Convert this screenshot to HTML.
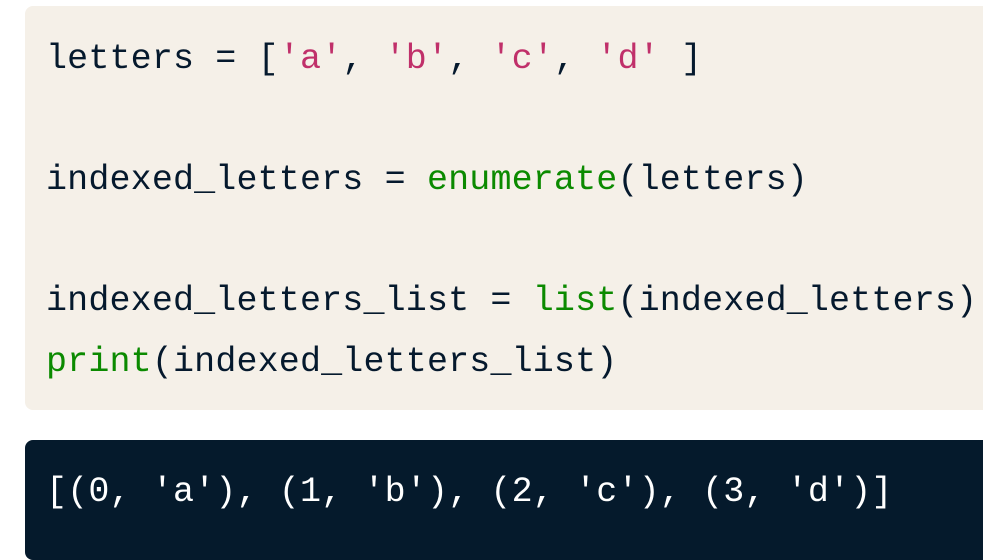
<!DOCTYPE html>
<html><head><meta charset="utf-8"><style>
html,body{margin:0;padding:0;width:983px;height:533px;overflow:hidden;background:#fff;}
.code{position:absolute;left:25px;top:6px;width:980px;height:404px;background:#f5f0e8;border-radius:8px;}
.out{position:absolute;left:25px;top:440px;width:980px;height:120px;background:#051a2c;border-radius:8px;}
pre{margin:0;font-family:"Liberation Mono",monospace;font-size:35px;letter-spacing:0.16px;line-height:60.5px;white-space:pre;position:absolute;}
.c pre{left:21px;top:23px;color:#05192d;}
.o pre{left:21px;top:22px;color:#fff;}
.s{color:#c0306a}.f{color:#0b8a00}
</style></head><body>
<div class="code c"><pre>letters = [<span class="s">'a'</span>, <span class="s">'b'</span>, <span class="s">'c'</span>, <span class="s">'d'</span> ]

indexed_letters = <span class="f">enumerate</span>(letters)

indexed_letters_list = <span class="f">list</span>(indexed_letters)
<span class="f">print</span>(indexed_letters_list)</pre></div>
<div class="out o"><pre>[(0, 'a'), (1, 'b'), (2, 'c'), (3, 'd')]</pre></div>
</body></html>
